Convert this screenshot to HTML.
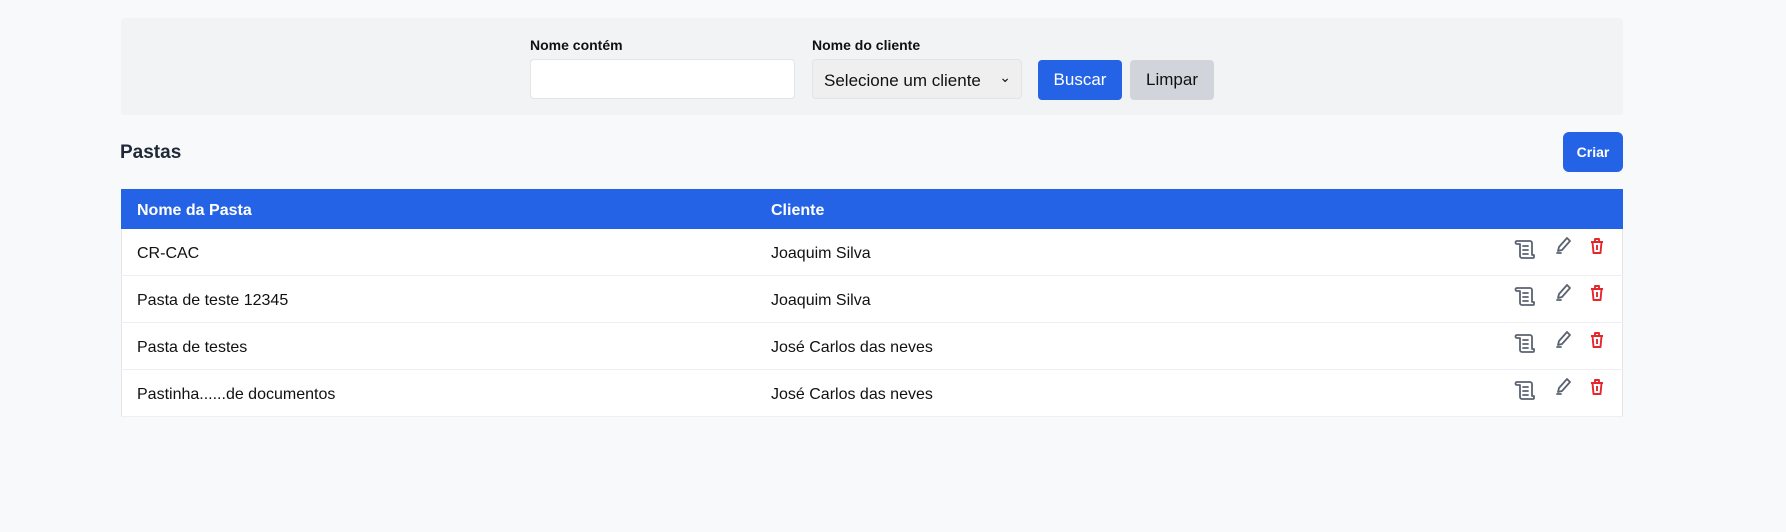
<!DOCTYPE html>
<html><head><meta charset="utf-8"><style>
*{box-sizing:border-box;margin:0;padding:0}
body{width:1786px;height:532px;background:#f8f9fb;font-family:"Liberation Sans",sans-serif;color:#111;position:relative;overflow:hidden}
.abs{position:absolute}
.panel{left:121px;top:18px;width:1502px;height:97px;background:#f2f3f5;border-radius:4px}
.lbl{font-size:14px;font-weight:bold;color:#111}
.inp{left:530px;top:59px;width:265px;height:40px;background:#fff;border:1px solid #e3e4e8;border-radius:4px}
.sel{left:812px;top:59px;width:210px;height:40px;background:#efefef;border:1px solid #e3e4e8;border-radius:4px;font-size:17px;padding:11px 0 0 11px}
.btn{height:40px;border-radius:4px;font-size:17px;text-align:center;line-height:40px}
.tbl{left:121px;top:189px;width:1502px;height:228px;background:#fff;border:1px solid #e3e4e8}
.hd{left:121px;top:189px;width:1502px;height:40px;background:#2563e6;color:#fff;font-weight:bold;font-size:16px}
.row{left:121px;width:1502px;height:47px;border-bottom:1px solid #eeeff2;font-size:16px}
</style></head><body>
<div class="abs panel"></div>
<div class="abs lbl" style="left:530px;top:37px">Nome contém</div>
<div class="abs lbl" style="left:812px;top:37px">Nome do cliente</div>
<div class="abs inp"></div>
<div class="abs sel">Selecione um cliente<span style="position:absolute;right:10px;top:9px;font-size:14px">&#8964;</span></div>
<div class="abs btn" style="left:1038px;top:60px;width:84px;background:#2563e6;color:#fff">Buscar</div>
<div class="abs btn" style="left:1130px;top:60px;width:84px;background:#d1d5db;color:#111">Limpar</div>
<div class="abs" style="left:120px;top:142px;font-size:19px;font-weight:bold;color:#1f2937">Pastas</div>
<div class="abs btn" style="left:1563px;top:132px;width:60px;background:#2563e6;color:#fff;font-size:14px;font-weight:bold;border-radius:6px">Criar</div>
<div class="abs tbl"></div>
<div class="abs hd"><span class="abs" style="left:16px;top:13px">Nome da Pasta</span><span class="abs" style="left:650px;top:13px">Cliente</span></div>
<div id="rows"></div>
<script>
const d=[["CR-CAC","Joaquim Silva"],["Pasta de teste 12345","Joaquim Silva"],["Pasta de testes","José Carlos das neves"],["Pastinha......de documentos","José Carlos das neves"]];
let h="";d.forEach((r,i)=>{const t=229+i*47;h+=`<div class="abs row" style="top:${t}px"><span class="abs" style="left:16px;top:16px">${r[0]}</span><span class="abs" style="left:650px;top:16px">${r[1]}</span>
<svg class="abs" style="left:1392px;top:8px" width="24" height="24" viewBox="0 0 24 24" fill="none" stroke="#5b6270" stroke-width="1.8" stroke-linecap="round" stroke-linejoin="round"><path d="M4 4h13a2 2 0 0 1 2 2v12h2v2a1 1 0 0 1-1 1H9a2 2 0 0 1-2-2V7M4 4a1.5 1.5 0 0 0 0 3h3M4 4h1M10 9h5M10 13h5M10 17h5"/></svg>
<svg class="abs" style="left:1433px;top:7px" width="18" height="20" viewBox="0 0 18 20" fill="none" stroke="#5b6270" stroke-width="1.8" stroke-linejoin="round"><path d="M13 2l3 3-8 9-4 1 1-4z"/><path d="M3 17h4" stroke-linecap="round"/></svg>
<svg class="abs" style="left:1468px;top:8px" width="16" height="18" viewBox="0 0 16 18" fill="none" stroke="#e5262d" stroke-width="1.9" stroke-linejoin="round"><path d="M2 5h12M6 5V2h4v3M3.5 5l1 11h7l1-11M8 8v5"/></svg></div>`});
document.getElementById("rows").innerHTML=h;
</script>
</body></html>
